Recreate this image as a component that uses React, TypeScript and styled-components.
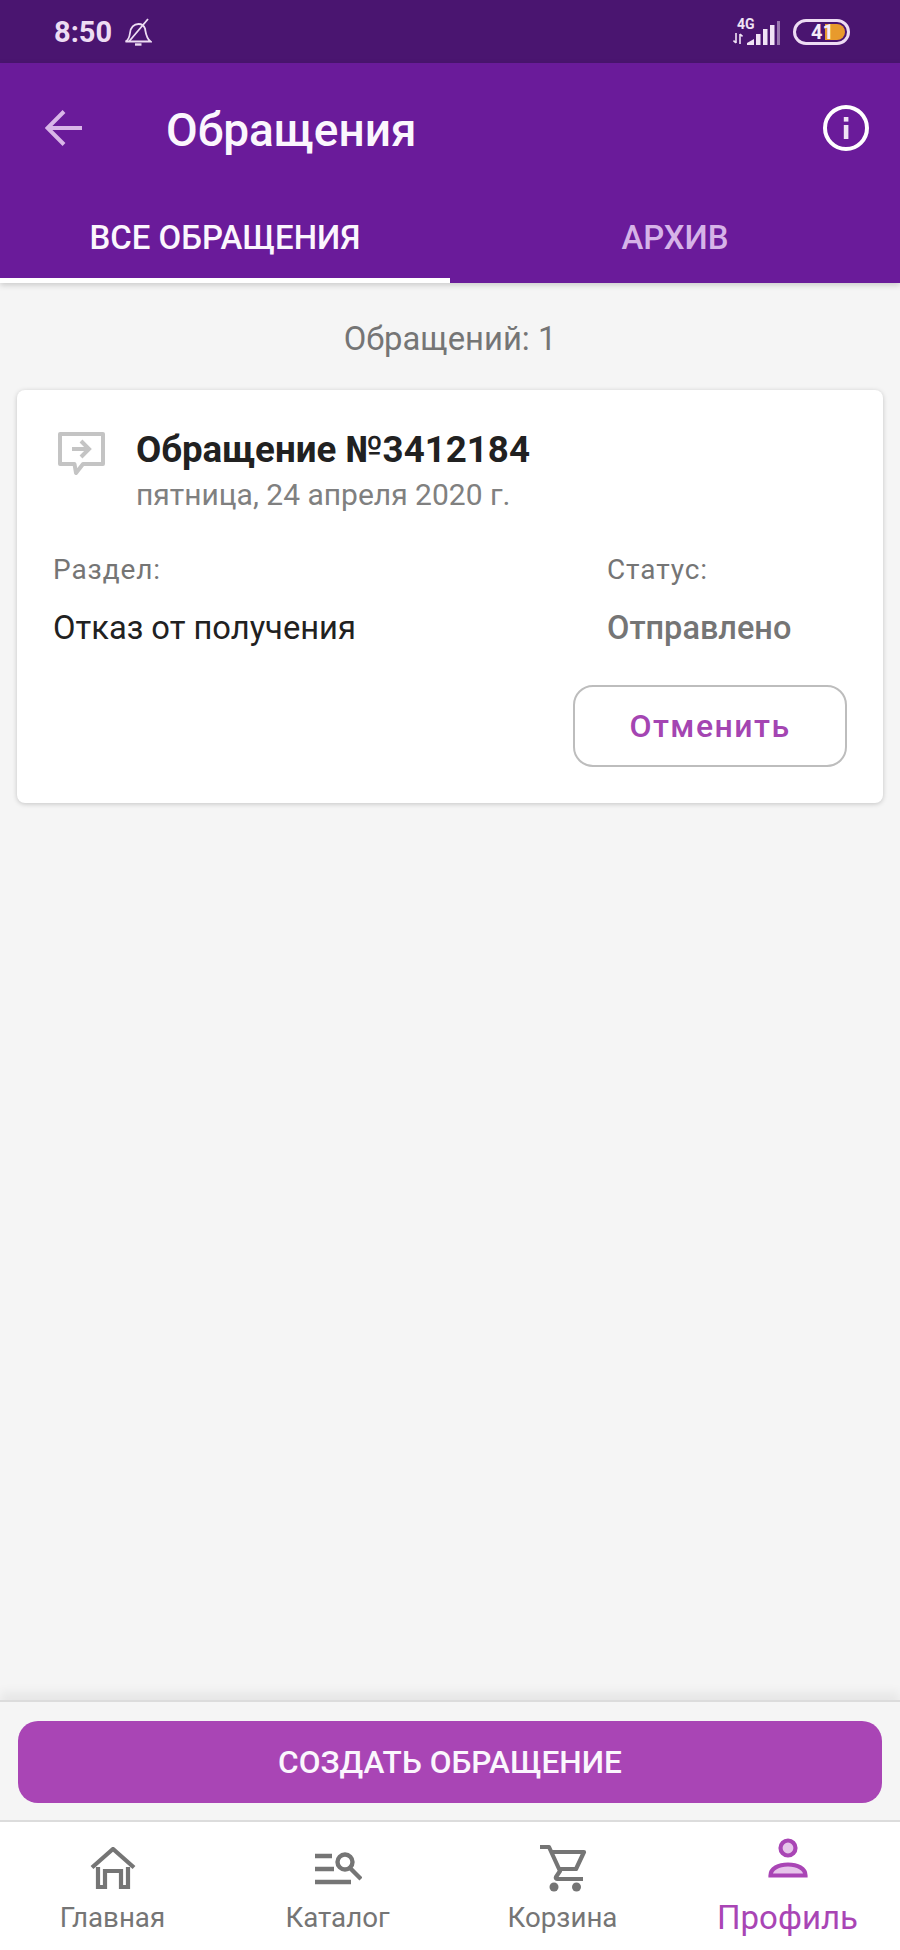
import styled, { createGlobalStyle } from 'styled-components';

const GlobalStyle = createGlobalStyle`
  html, body {
    margin: 0;
    padding: 0;
    background: #f5f5f5;
    font-family: Roboto, "Noto Sans", sans-serif;
  }
  * { box-sizing: border-box; }
`;

function BackIcon() {
  return (
    <svg width="38" height="38" viewBox="0 0 38 38" fill="none" stroke="#d9b6e8" strokeWidth="4">
      <path d="M37 19H3" />
      <path d="M19 2.500 2.500 19 19 35.500" />
    </svg>
  );
}

function InfoIcon() {
  return (
    <svg width="46" height="46" viewBox="0 0 46 46" fill="none">
      <circle cx="23" cy="23" r="21" stroke="#fff" strokeWidth="4" />
      <rect x="20.800" y="20" width="4.600" height="14" fill="#f0e3f5" />
      <rect x="20.800" y="12" width="4.600" height="4.600" fill="#f0e3f5" />
    </svg>
  );
}

function BellOffIcon() {
  return (
    <svg width="28" height="28" viewBox="0 0 28 28" fill="none" stroke="#eddcf3" strokeWidth="1.800">
      <path d="M1.500 23.500c3-1.500 4-4.500 4.500-8.500C6.500 9.500 10 6 14.500 6c3 0 5.500 1.500 6.500 4.500 .8 4 .8 9 5.500 13Z" />
      <path d="M11 26.500h6.500" strokeWidth="2.400" />
      <path d="M24 1 5 23.500" />
    </svg>
  );
}

function SignalIcon() {
  return (
    <svg width="33" height="24" viewBox="0 0 33 24" fill="#f0e3f5">
      <path d="M0 24h7v-6L0 22Z" />
      <rect x="9" y="13" width="4.500" height="11" />
      <rect x="16" y="8" width="4.500" height="16" />
      <rect x="23" y="4" width="4.500" height="20" />
      <rect x="30" y="0" width="3" height="24" fill="#9a78b0" />
    </svg>
  );
}

function TransferArrows() {
  return (
    <svg width="10" height="11" viewBox="0 0 10 11" fill="none" stroke="#f0e3f5" strokeWidth="1.600">
      <path d="M3 0v10M.5 7.500 3 10M7 11V1M7 1l2.500 2.500" />
    </svg>
  );
}

function TicketIcon() {
  return (
    <svg width="48" height="48" viewBox="0 0 48 48" fill="none">
      <path
        d="M3 3h43v30H26l-7 9-1.500-9H3Z"
        stroke="#c4c4c4"
        strokeWidth="4"
        strokeLinejoin="round"
      />
      <path d="M15 18h17M24 10l8 8-8 8" stroke="#c4c4c4" strokeWidth="4" />
    </svg>
  );
}

function HomeIcon() {
  return (
    <svg width="46" height="42" viewBox="0 0 46 42" fill="none" stroke="#757575" strokeWidth="4.200">
      <path d="M2 20.500 23 2l21 18.500" />
      <path d="M8 20v20h7V24h16v16h7V20" strokeLinejoin="miter" />
    </svg>
  );
}

function CatalogIcon() {
  return (
    <svg width="48" height="34" viewBox="0 0 48 34" fill="none" stroke="#757575" strokeWidth="4.400">
      <path d="M1 5h17M1 18h19M1 31h36" />
      <circle cx="31" cy="11" r="7.500" />
      <path d="M36 17l11 11" />
    </svg>
  );
}

function CartIcon() {
  return (
    <svg width="48" height="48" viewBox="0 0 48 48" fill="none">
      <path
        d="M1 3h9l11 24-4 6c-.5 1 0 2 1 2h26M12 8h33l-8 17H20"
        stroke="#757575"
        strokeWidth="4.200"
        strokeLinejoin="round"
      />
      <circle cx="15" cy="43" r="4.500" fill="#757575" />
      <circle cx="37.500" cy="43" r="4.500" fill="#757575" />
    </svg>
  );
}

function ProfileIcon() {
  return (
    <svg width="40" height="40" viewBox="0 0 40 40" fill="none" stroke="#a945b5" strokeWidth="4.200">
      <circle cx="20" cy="10" r="7.500" fill="#e6c4ea" />
      <path d="M2.500 37.500c0-7 8-11 17.500-11s17.500 4 17.500 11Z" fill="#e6c4ea" />
    </svg>
  );
}

const navItems = [
  { label: 'Главная', icon: <HomeIcon /> },
  { label: 'Каталог', icon: <CatalogIcon /> },
  { label: 'Корзина', icon: <CartIcon /> },
  { label: 'Профиль', icon: <ProfileIcon />, active: true },
];

export default function App() {
  return (
    <>
      <GlobalStyle />
      <Page>
        <StatusBar>
          <StatusLeft>
            <Clock>8:50</Clock>
            <BellOffIcon />
          </StatusLeft>
          <StatusRight>
            <NetworkBlock>
              <NetworkLabel>4G</NetworkLabel>
              <TransferArrows />
            </NetworkBlock>
            <SignalIcon />
            <Battery>
              <BatteryFill />
              <BatteryValue>41</BatteryValue>
            </Battery>
          </StatusRight>
        </StatusBar>

        <Header>
          <Toolbar>
            <BackButton>
              <BackIcon />
            </BackButton>
            <Title>Обращения</Title>
            <InfoButton>
              <InfoIcon />
            </InfoButton>
          </Toolbar>
          <Tabs>
            <Tab $active>ВСЕ ОБРАЩЕНИЯ</Tab>
            <Tab>АРХИВ</Tab>
          </Tabs>
        </Header>

        <Main>
          <Count>Обращений: 1</Count>
          <Card>
            <CardHead>
              <CardIcon>
                <TicketIcon />
              </CardIcon>
              <CardHeading>
                <CardTitle>Обращение №3412184</CardTitle>
                <CardDate>пятница, 24 апреля 2020 г.</CardDate>
              </CardHeading>
            </CardHead>
            <Fields>
              <Field>
                <FieldLabel>Раздел:</FieldLabel>
                <FieldValue>Отказ от получения</FieldValue>
              </Field>
              <StatusField>
                <FieldLabel>Статус:</FieldLabel>
                <FieldValue $muted>Отправлено</FieldValue>
              </StatusField>
            </Fields>
            <CardActions>
              <CancelButton>Отменить</CancelButton>
            </CardActions>
          </Card>
        </Main>

        <ActionStrip>
          <CreateButton>СОЗДАТЬ ОБРАЩЕНИЕ</CreateButton>
        </ActionStrip>

        <BottomNav>
          {navItems.map((item) => (
            <NavItem key={item.label}>
              <NavIcon $active={item.active}>{item.icon}</NavIcon>
              <NavLabel $active={item.active}>{item.label}</NavLabel>
            </NavItem>
          ))}
        </BottomNav>
      </Page>
    </>
  );
}

const Page = styled.div`
  width: 900px;
  height: 1950px;
  display: flex;
  flex-direction: column;
  overflow: hidden;
  background: #f5f5f5;
`;

const StatusBar = styled.div`
  height: 63px;
  flex: none;
  background: #4a1570;
  display: flex;
  align-items: center;
  justify-content: space-between;
  padding: 0 50px 0 54px;
`;

const StatusLeft = styled.div`
  display: flex;
  align-items: center;
  gap: 12px;
`;

const Clock = styled.span`
  color: #eddcf3;
  font-size: 29px;
  font-weight: 700;
`;

const StatusRight = styled.div`
  display: flex;
  align-items: flex-end;
  height: 26px;
`;

const NetworkBlock = styled.div`
  display: flex;
  flex-direction: column;
  align-items: flex-start;
  gap: 3px;
  width: 14px;
  margin-bottom: 1px;
  color: #f0e3f5;
`;

const NetworkLabel = styled.span`
  margin-left: 4px;
  font-size: 14px;
  font-weight: 700;
  line-height: 12px;
  white-space: nowrap;
`;

const Battery = styled.div`
  position: relative;
  width: 57px;
  height: 26px;
  margin-left: 13px;
  border: 3px solid #eddcf3;
  border-radius: 13px;
  display: flex;
  align-items: center;
  justify-content: flex-end;
  padding-right: 2px;
`;

const BatteryFill = styled.div`
  width: 20px;
  height: 16px;
  background: #e89a2c;
  border-radius: 0 8px 8px 0;
`;

const BatteryValue = styled.span`
  position: absolute;
  left: 15px;
  top: -1px;
  color: #f5ecf8;
  font-size: 20px;
  line-height: 22px;
  font-weight: 700;
`;

const Header = styled.header`
  height: 220px;
  flex: none;
  background: #6a1b9a;
  display: flex;
  flex-direction: column;
  box-shadow: 0 2px 6px rgba(0, 0, 0, 0.18);
`;

const Toolbar = styled.div`
  height: 130px;
  display: flex;
  align-items: center;
  padding: 0 31px 0 45px;
`;

const BackButton = styled.div`
  width: 121px;
  display: flex;
`;

const Title = styled.h1`
  flex: 1;
  margin: 0;
  color: #fbf6fd;
  font-size: 46px;
  font-weight: 500;
  line-height: 54px;
  padding-top: 3px;
`;

const InfoButton = styled.div`
  display: flex;
`;

const Tabs = styled.div`
  flex: 1;
  display: grid;
  grid-template-columns: 1fr 1fr;
`;

const Tab = styled.div<{ $active?: boolean }>`
  display: flex;
  align-items: center;
  justify-content: center;
  padding-top: 4px;
  font-size: 32.900px;
  font-weight: 500;
  color: ${(p) => (p.$active ? '#fbf6fd' : '#d6b3e8')};
  border-bottom: 5px solid ${(p) => (p.$active ? '#fff' : 'transparent')};
`;

const Main = styled.main`
  flex: 1;
  padding: 0 17px;
  display: flex;
  flex-direction: column;
`;

const Count = styled.div`
  height: 107px;
  display: flex;
  align-items: center;
  justify-content: center;
  padding-top: 4px;
  color: #757575;
  font-size: 32.800px;
`;

const Card = styled.section`
  height: 413px;
  background: #fff;
  border-radius: 8px;
  box-shadow: 0 1px 5px rgba(0, 0, 0, 0.2);
  padding: 36px;
  display: flex;
  flex-direction: column;
`;

const CardHead = styled.div`
  display: flex;
  align-items: flex-start;
  height: 94px;
`;

const CardIcon = styled.div`
  width: 83px;
  padding: 5px 0 0 4px;
  flex: none;
`;

const CardHeading = styled.div`
  display: flex;
  flex-direction: column;
  gap: 4px;
  padding-top: 2px;
`;

const CardTitle = styled.div`
  color: #212121;
  font-size: 36.700px;
  font-weight: 700;
  line-height: 44px;
`;

const CardDate = styled.div`
  color: #808080;
  font-size: 30px;
  line-height: 38px;
`;

const Fields = styled.div`
  display: flex;
  justify-content: space-between;
  margin-top: 34px;
`;

const Field = styled.div`
  display: flex;
  flex-direction: column;
  gap: 24px;
`;

const StatusField = styled(Field)`
  width: 240px;
`;

const FieldLabel = styled.div`
  color: #757575;
  font-size: 28px;
  line-height: 32px;
  letter-spacing: 0.900px;
`;

const FieldValue = styled.div<{ $muted?: boolean }>`
  color: ${(p) => (p.$muted ? '#757575' : '#212121')};
  font-size: ${(p) => (p.$muted ? '32.500px' : '32.700px')};
  line-height: 36px;
  font-weight: ${(p) => (p.$muted ? 500 : 400)};
`;

const CardActions = styled.div`
  display: flex;
  justify-content: flex-end;
  margin-top: 39px;
`;

const CancelButton = styled.button`
  width: 274px;
  height: 82px;
  background: #fff;
  border: 2px solid #bdbdbd;
  border-radius: 20px;
  color: #a445b2;
  font-family: inherit;
  font-size: 32px;
  font-weight: 500;
  letter-spacing: 1.500px;
`;

const ActionStrip = styled.div`
  height: 122px;
  flex: none;
  padding: 19px 18px 0;
  background: #f5f5f5;
  border-top: 2px solid #dcdcdc;
  border-bottom: 2px solid #dcdcdc;
  box-shadow: 0 -8px 10px rgba(0, 0, 0, 0.06);
`;

const CreateButton = styled.button`
  width: 100%;
  height: 82px;
  border: 0;
  border-radius: 20px;
  background: #a945b5;
  color: #fbf6fd;
  font-family: inherit;
  font-size: 31.600px;
  font-weight: 500;
`;

const BottomNav = styled.nav`
  height: 128px;
  flex: none;
  background: #fff;
  display: grid;
  grid-template-columns: repeat(4, 1fr);
`;

const NavItem = styled.div`
  display: flex;
  flex-direction: column;
  align-items: center;
  padding-top: 13px;
`;

const NavIcon = styled.div<{ $active?: boolean }>`
  height: 65px;
  display: flex;
  align-items: ${(p) => (p.$active ? 'flex-start' : 'center')};
  justify-content: center;
  padding-top: ${(p) => (p.$active ? '3px' : '0')};
`;

const NavLabel = styled.span<{ $active?: boolean }>`
  color: ${(p) => (p.$active ? '#a945b5' : '#757575')};
  font-size: ${(p) => (p.$active ? '33px' : '27.700px')};
  line-height: 36px;
`;
